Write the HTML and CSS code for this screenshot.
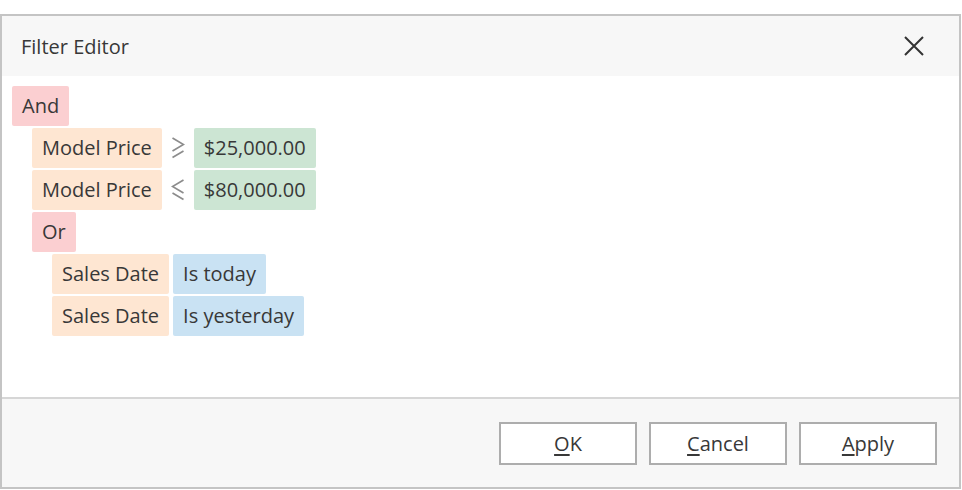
FILE: index.html
```html
<!DOCTYPE html>
<html>
<head>
<meta charset="utf-8">
<link rel="stylesheet" href="styles.css">
</head>
<body>
<div class="dialog">
  <div class="header">
    <span class="title">Filter Editor</span>
    <button class="close" aria-label="Close">
      <svg width="20" height="20" viewBox="0 0 20 20"><path d="M1 1 L19 19 M19 1 L1 19" stroke="#333" stroke-width="2" fill="none"/></svg>
    </button>
  </div>
  <div class="content">
    <div class="row lvl0"><span class="chip group">And</span></div>
    <div class="row lvl1">
      <span class="chip field">Model Price</span>
      <span class="op"><svg width="14" height="22" viewBox="0 0 14 22"><path d="M1.5 1 L12.5 7.5 L1.5 14 M1.5 20.5 L12.5 14" stroke="#8c8c8c" stroke-width="1.7" fill="none"/></svg></span>
      <span class="chip value">$25,000.00</span>
    </div>
    <div class="row lvl1">
      <span class="chip field">Model Price</span>
      <span class="op"><svg width="14" height="22" viewBox="0 0 14 22"><path d="M12.5 1 L1.5 7.5 L12.5 14 M12.5 20.5 L1.5 14" stroke="#8c8c8c" stroke-width="1.7" fill="none"/></svg></span>
      <span class="chip value">$80,000.00</span>
    </div>
    <div class="row lvl1"><span class="chip group">Or</span></div>
    <div class="row lvl2">
      <span class="chip field">Sales Date</span>
      <span class="chip date">Is today</span>
    </div>
    <div class="row lvl2">
      <span class="chip field">Sales Date</span>
      <span class="chip date">Is yesterday</span>
    </div>
  </div>
  <div class="footer">
    <button class="btn"><u>O</u>K</button>
    <button class="btn"><u>C</u>ancel</button>
    <button class="btn"><u>A</u>pply</button>
  </div>
</div>
</body>
</html>
```
FILE: styles.css
```css
html, body {
  margin: 0;
  padding: 0;
  background: #ffffff;
}
body {
  padding-top: 14px;
  font-family: "Open Sans", "Noto Sans", sans-serif;
  font-size: 20px;
  color: #383838;
}
.dialog {
  width: 961px;
  height: 475px;
  box-sizing: border-box;
  border: 2px solid #c4c4c4;
  display: flex;
  flex-direction: column;
  background: #fff;
}
.header {
  height: 60px;
  background: #f7f7f7;
  display: flex;
  align-items: center;
  justify-content: space-between;
  padding: 0 35px 0 19px;
  flex-shrink: 0;
}
.title {
  font-size: 20px;
  color: #383838;
}
.close {
  border: none;
  background: transparent;
  padding: 0;
  width: 20px;
  height: 20px;
  display: flex;
}
.content {
  flex: 1;
  padding: 10px 10px;
  display: flex;
  flex-direction: column;
  gap: 2px;
  border-bottom: 2px solid #d6d6d6;
}
.row {
  display: flex;
  align-items: center;
  gap: 4px;
}
.lvl1 { padding-left: 20px; }
.lvl2 { padding-left: 40px; }
.chip {
  height: 40px;
  line-height: 40px;
  padding: 0 10px;
  border-radius: 2px;
  white-space: nowrap;
  color: #383838;
}
.group { background: #fbcfd1; }
.field { background: #fee6d2; }
.value { background: #cce5d3; }
.date { background: #c9e2f3; }
.op {
  width: 24px;
  height: 40px;
  display: flex;
  align-items: center;
  justify-content: center;
}
.footer {
  height: 88px;
  background: #f7f7f7;
  display: flex;
  align-items: center;
  justify-content: flex-end;
  gap: 12px;
  padding-right: 22px;
  flex-shrink: 0;
}
.btn {
  width: 138px;
  height: 43px;
  box-sizing: border-box;
  border: 2px solid #adadad;
  background: #fff;
  font-family: "Open Sans", "Noto Sans", sans-serif;
  font-size: 20px;
  color: #383838;
  padding: 0;
}
.btn u {
  text-underline-offset: 3px;
}
```
